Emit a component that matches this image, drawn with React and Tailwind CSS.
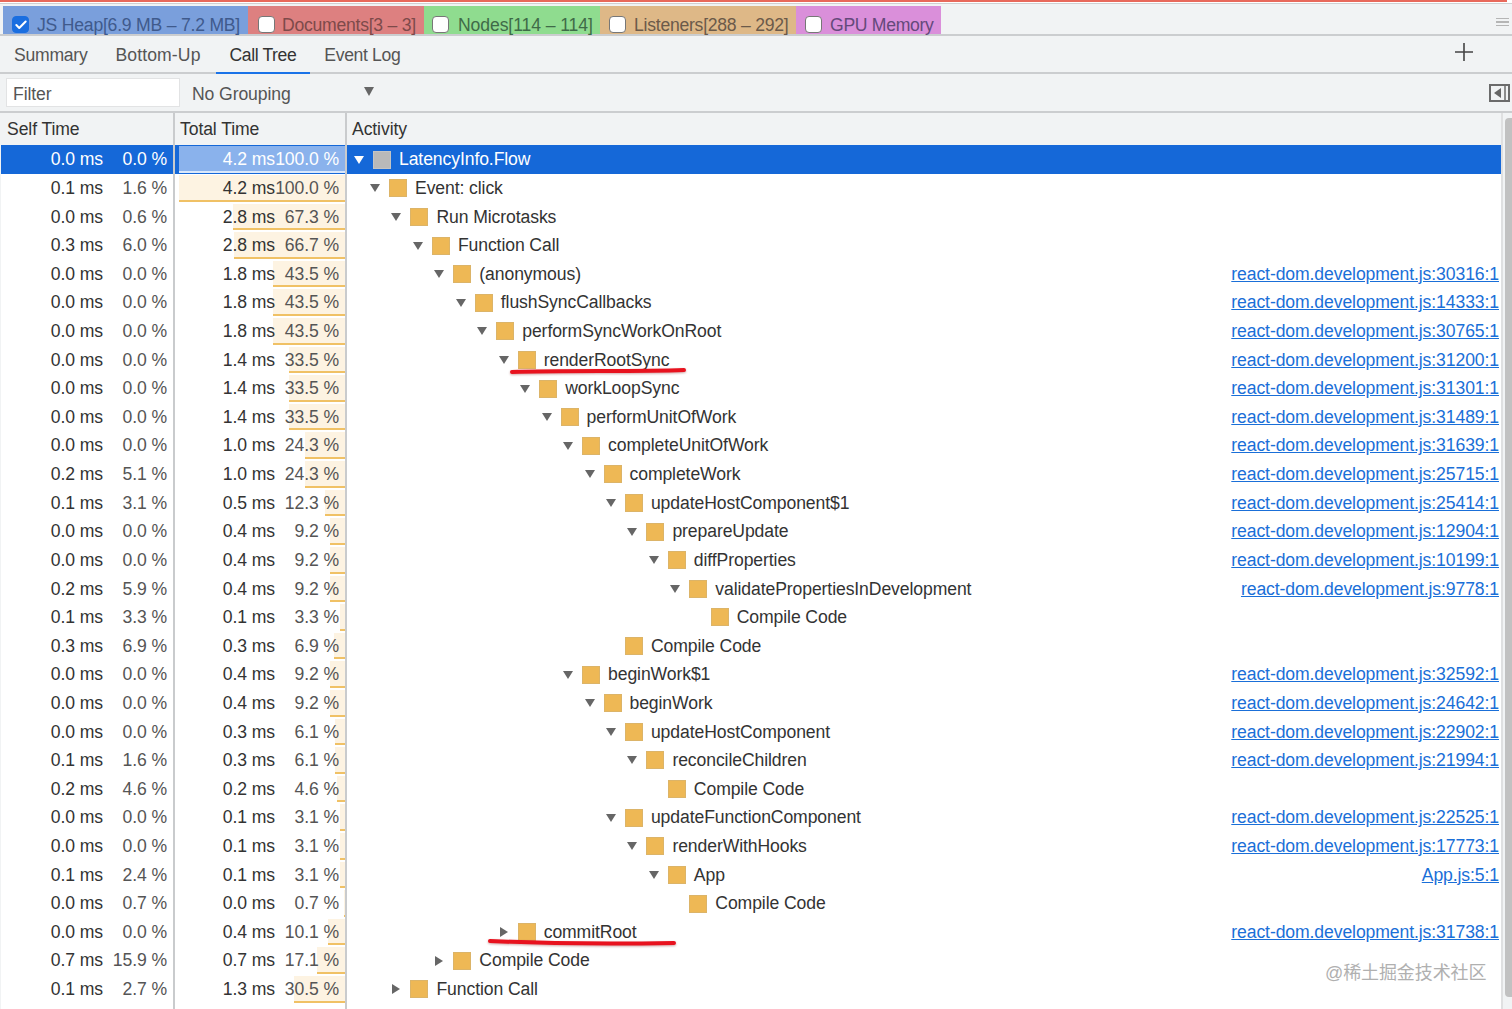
import React from "react";
import { Check } from "lucide-react";

const L = "react-dom.development.js:";
const rows = [
  ["0.0","0.0","4.2","100.0",0,"d","LatencyInfo.Flow",""],
  ["0.1","1.6","4.2","100.0",1,"d","Event: click",""],
  ["0.0","0.6","2.8","67.3",2,"d","Run Microtasks",""],
  ["0.3","6.0","2.8","66.7",3,"d","Function Call",""],
  ["0.0","0.0","1.8","43.5",4,"d","(anonymous)",L+"30316:1"],
  ["0.0","0.0","1.8","43.5",5,"d","flushSyncCallbacks",L+"14333:1"],
  ["0.0","0.0","1.8","43.5",6,"d","performSyncWorkOnRoot",L+"30765:1"],
  ["0.0","0.0","1.4","33.5",7,"d","renderRootSync",L+"31200:1"],
  ["0.0","0.0","1.4","33.5",8,"d","workLoopSync",L+"31301:1"],
  ["0.0","0.0","1.4","33.5",9,"d","performUnitOfWork",L+"31489:1"],
  ["0.0","0.0","1.0","24.3",10,"d","completeUnitOfWork",L+"31639:1"],
  ["0.2","5.1","1.0","24.3",11,"d","completeWork",L+"25715:1"],
  ["0.1","3.1","0.5","12.3",12,"d","updateHostComponent$1",L+"25414:1"],
  ["0.0","0.0","0.4","9.2",13,"d","prepareUpdate",L+"12904:1"],
  ["0.0","0.0","0.4","9.2",14,"d","diffProperties",L+"10199:1"],
  ["0.2","5.9","0.4","9.2",15,"d","validatePropertiesInDevelopment",L+"9778:1"],
  ["0.1","3.3","0.1","3.3",16,"","Compile Code",""],
  ["0.3","6.9","0.3","6.9",12,"","Compile Code",""],
  ["0.0","0.0","0.4","9.2",10,"d","beginWork$1",L+"32592:1"],
  ["0.0","0.0","0.4","9.2",11,"d","beginWork",L+"24642:1"],
  ["0.0","0.0","0.3","6.1",12,"d","updateHostComponent",L+"22902:1"],
  ["0.1","1.6","0.3","6.1",13,"d","reconcileChildren",L+"21994:1"],
  ["0.2","4.6","0.2","4.6",14,"","Compile Code",""],
  ["0.0","0.0","0.1","3.1",12,"d","updateFunctionComponent",L+"22525:1"],
  ["0.0","0.0","0.1","3.1",13,"d","renderWithHooks",L+"17773:1"],
  ["0.1","2.4","0.1","3.1",14,"d","App","App.js:5:1"],
  ["0.0","0.7","0.0","0.7",15,"","Compile Code",""],
  ["0.0","0.0","0.4","10.1",7,"r","commitRoot",L+"31738:1"],
  ["0.7","15.9","0.7","17.1",4,"r","Compile Code",""],
  ["0.1","2.7","1.3","30.5",2,"r","Function Call",""],
];

const tabs = [
  ["w-[245px] bg-[#7a9fdc] text-[#3f5a8c] pl-[9px] gap-[8px] tracking-[-0.22px]", "JS Heap[6.9 MB – 7.2 MB]", true],
  ["w-[176px] bg-[#dd8080] text-[#7d4a4a] pl-[10px] gap-[7px] tracking-[-0.25px]", "Documents[3 – 3]", false],
  ["w-[176px] bg-[#8fdc8f] text-[#3f6b48] pl-[8px] gap-[9px]", "Nodes[114 – 114]", false],
  ["w-[196px] bg-[#deb887] text-[#6b5a4a] pl-[9px] gap-[8px] tracking-[-0.25px]", "Listeners[288 – 292]", false],
  ["w-[145px] bg-[#da8fda] text-[#64497a] pl-[9px] gap-[8px] tracking-[-0.3px]", "GPU Memory", false],
];

function Box({ checked }) {
  return (
    <span className={"-mt-[2px] flex h-[17px] w-[17px] shrink-0 items-center justify-center rounded-[4px] border " + (checked ? "border-[#1a6ee0] bg-[#1a6ee0]" : "border-[#777777] bg-white")}>
      {checked && <Check size={14} strokeWidth={3.5} className="text-white" />}
    </span>
  );
}

function Arrow({ kind, active }) {
  const fill = active ? "#ffffff" : "#666666";
  if (kind === "d") return <svg width="12" height="10" viewBox="0 0 12 10" className="shrink-0"><path d="M1 1h10L6 9z" fill={fill} /></svg>;
  if (kind === "r") return <svg width="12" height="12" viewBox="0 0 12 12" className="shrink-0"><path d="M2 1l8 5-8 5z" fill={fill} /></svg>;
  return <span className="w-[12px] shrink-0" />;
}

function Row({ r, i }) {
  const active = i === 0;
  const textLeft = r[4] === 0 ? 399 : 415 + (r[4] - 1) * 21.45;
  const pad = textLeft - 347 - 46;
  const msC = active ? "text-white" : "text-[#333333]";
  const pctC = active ? "text-white" : "text-[#555555]";
  return (
    <div className={"flex h-[28.62px] shrink-0 whitespace-nowrap " + (active ? "bg-[#1568d8]" : "bg-white")}>
      <div className="flex w-[172px] shrink-0 items-center justify-end pr-[6px] pt-[1px]">
        <span className={msC}>{r[0]} ms</span>
        <span className={"w-[64px] shrink-0 text-right " + pctC}>{r[1]} %</span>
      </div>
      <div className="w-[2px] shrink-0 bg-[#c9cbcd]" />
      <div className="relative flex w-[170px] shrink-0 items-center justify-end pr-[6px] pt-[1px]">
        <div
          className={"absolute bottom-[1px] right-0 top-[1px] border-b-2 " + (active ? "border-[#dbe8fb] bg-[#8ab2ec]" : "border-[#f0c165] bg-[#fdf3e2]")}
          style={{ width: (166 * parseFloat(r[3])) / 100 }}
        />
        <span className={"relative " + msC}>{r[2]} ms</span>
        <span className={"relative w-[64px] shrink-0 text-right " + pctC}>{r[3]} %</span>
      </div>
      <div className="w-[2px] shrink-0 bg-[#c9cbcd]" />
      <div className="flex min-w-0 flex-1 items-center pr-[2px]" style={{ paddingLeft: pad }}>
        <Arrow kind={r[5]} active={active} />
        <span className={"ml-[8px] h-[18px] w-[18px] shrink-0 border " + (active ? "border-[#c4c4c4] bg-[#b9b9b9]" : "border-[#dcb468] bg-[#eeb855]")} />
        <span className={"ml-[8px] pt-[1px] " + (active ? "text-white" : "text-[#333333]")}>{r[6]}</span>
        {r[7] && <a className="ml-auto pt-[1px] text-[#1a6fd8] underline">{r[7]}</a>}
      </div>
    </div>
  );
}

export default function App() {
  return (
    <div className="relative flex h-[1009px] w-[1512px] flex-col overflow-hidden bg-[#f1f3f4] text-[17.6px] font-['Liberation_Sans',Arial,sans-serif] leading-none tracking-[-0.1px]">
      {/* timeline sliver */}
      <div className="h-[3px] shrink-0 bg-white">
        <div className="h-[2px] w-[1507px] bg-[#e8695b]" />
      </div>
      <div className="flex h-[3px] shrink-0 border-t border-[#cfd0d2]" />
      {/* memory counters */}
      <div className="flex h-[30px] shrink-0 items-stretch border-b-2 border-[#cbcdcf] pl-[3px]">
        {tabs.map((t) => (
          <div key={t[1]} className={"flex items-center whitespace-nowrap pt-[11px] " + t[0]}>
            <Box checked={t[2]} />
            <span>{t[1]}</span>
          </div>
        ))}
        <div className="ml-auto mr-[3px] flex flex-col justify-center gap-[2px] pt-[4px]">
          <span className="h-[1.5px] w-[13px] bg-[#b5b5b5]" />
          <span className="h-[1.5px] w-[13px] bg-[#b5b5b5]" />
          <span className="h-[1.5px] w-[13px] bg-[#b5b5b5]" />
        </div>
      </div>
      {/* view tabs */}
      <div className="flex h-[38px] shrink-0 items-stretch border-b-2 border-[#cbcdcf] text-[#555555]">
        <div className="flex items-center pl-[14px] pr-[14px] pt-[3px] tracking-[-0.25px]">Summary</div>
        <div className="flex items-center pl-[14px] pr-[15px] pt-[3px] tracking-[0.1px]">Bottom-Up</div>
        <div className="-mb-[2px] flex items-center border-b-2 border-[#1a73e8] px-[14px] pt-[3px] tracking-[-0.4px] text-[#333333]">Call Tree</div>
        <div className="flex items-center px-[14px] pt-[3px] tracking-[-0.35px]">Event Log</div>
        <div className="ml-auto mr-[39px] mb-[5px] flex items-center">
          <svg width="18" height="18" viewBox="0 0 18 18"><path d="M9 0v18M0 9h18" stroke="#444444" strokeWidth="1.6" /></svg>
        </div>
      </div>
      {/* filter bar */}
      <div className="flex h-[39px] shrink-0 items-center border-b-2 border-[#cbcdcf] pl-[6px] pr-[2px]">
        <div className="flex h-[29px] w-[174px] items-center border border-[#e2e3e4] bg-white pl-[6px] pt-[4px] text-[#555555]">Filter</div>
        <span className="ml-[12px] pt-[5px] text-[#555555]">No Grouping</span>
        <svg width="10" height="9" viewBox="0 0 10 9" className="ml-[73px] -mt-[2px]"><path d="M0 0h10L5 9z" fill="#666666" /></svg>
        <span className="ml-auto flex h-[18px] w-[21px] items-center border-2 border-[#6b6b6b]">
          <svg width="17" height="14" viewBox="0 0 17 14"><path d="M10 2v10L3 7z" fill="#666666" /><path d="M14 0v14" stroke="#6b6b6b" strokeWidth="1.5" /></svg>
        </span>
      </div>
      {/* table + scrollbar */}
      <div className="flex min-h-0 flex-1">
        <div className="flex w-[1501px] shrink-0 flex-col overflow-hidden pl-[1px]">
          <div className="flex h-[32.4px] shrink-0 text-[#333333]">
            <div className="flex w-[172px] shrink-0 items-center pl-[6px] pt-[2px]">Self Time</div>
            <div className="w-[2px] shrink-0 bg-[#c9cbcd]" />
            <div className="flex w-[170px] shrink-0 items-center pl-[5px] pt-[2px]">Total Time</div>
            <div className="w-[2px] shrink-0 bg-[#c9cbcd]" />
            <div className="flex flex-1 items-center pl-[5px] pt-[2px]">Activity</div>
          </div>
          {rows.map((r, i) => <Row key={i} r={r} i={i} />)}
          <div className="flex flex-1 bg-white">
            <div className="w-[172px] shrink-0" />
            <div className="w-[2px] shrink-0 bg-[#c9cbcd]" />
            <div className="w-[170px] shrink-0" />
            <div className="w-[2px] shrink-0 bg-[#c9cbcd]" />
          </div>
        </div>
        <div className="flex flex-1 flex-col border-l-2 border-[#dfe0e1] pb-[12px] pl-[2px] pt-[5px]">
          <div className="flex-1 rounded-l-[4px] bg-[#c1c1c1]" />
        </div>
      </div>
      {/* hand-drawn annotations */}
      <svg className="pointer-events-none absolute left-[505px] top-[365px] drop-shadow-[0_1px_1px_rgba(120,0,0,0.35)]" width="185" height="12" viewBox="0 0 185 12">
        <path d="M7 7C60 5 130 7 179 5" stroke="#e8121e" strokeWidth="4" fill="none" strokeLinecap="round" />
      </svg>
      <svg className="pointer-events-none absolute left-[484px] top-[936px] drop-shadow-[0_1px_1px_rgba(120,0,0,0.35)]" width="196" height="12" viewBox="0 0 196 12">
        <path d="M6 5C70 8 130 8 190 7" stroke="#e8121e" strokeWidth="4" fill="none" strokeLinecap="round" />
      </svg>
      <div className="pointer-events-none absolute left-[1325px] top-[964px] whitespace-nowrap font-['Liberation_Sans','Noto_Sans_CJK_SC',sans-serif] text-[18px] text-[#b0b0b0]">@稀土掘金技术社区</div>
    </div>
  );
}
